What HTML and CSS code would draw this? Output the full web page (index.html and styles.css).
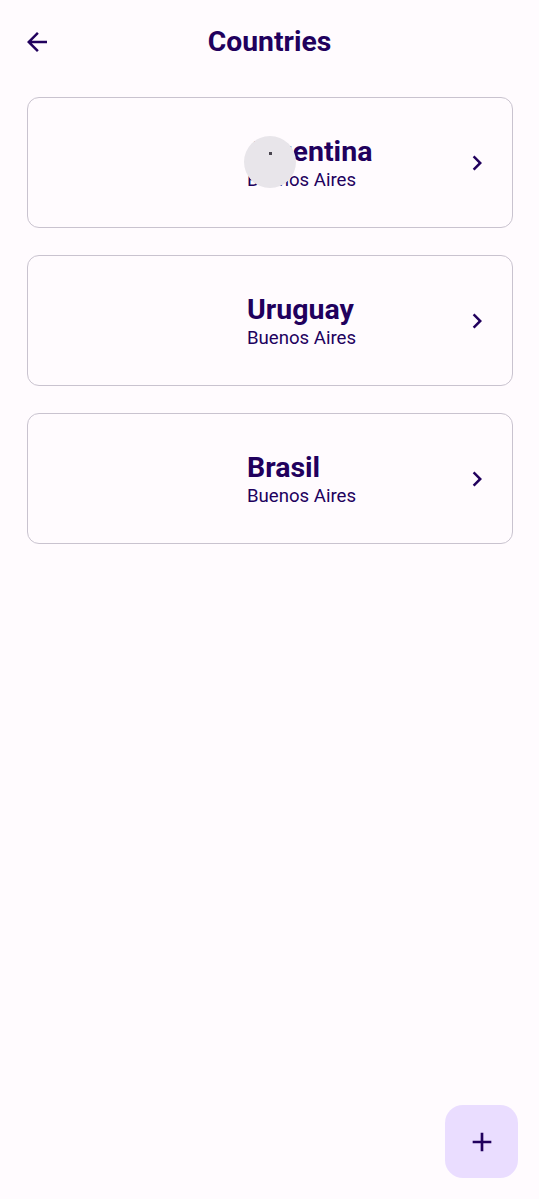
FILE: index.html
```html
<!DOCTYPE html>
<html>
<head>
<meta charset="utf-8">
<link rel="stylesheet" href="styles.css">
</head>
<body>
<div class="screen">
  <header class="topbar">
    <button class="back" aria-label="Back">
      <svg width="30" height="30" viewBox="0 0 24 24"><path d="M20 11H7.83l5.59-5.59L12 4l-8 8 8 8 1.41-1.41L7.83 13H20v-2z" fill="#21005d"/></svg>
    </button>
    <h1 class="title">Countries</h1>
  </header>
  <main class="list">
    <div class="card">
      <div class="thumb"></div>
      <div class="text">
        <div class="name">Argentina</div>
        <div class="sub">Buenos Aires</div>
      </div>
      <div class="chev"><svg width="30" height="30" viewBox="0 0 24 24"><path d="M8.59 16.59 13.17 12 8.59 7.41 10 6l6 6-6 6z" fill="#21005d"/></svg></div>
      <div class="loader"><span class="dot"></span></div>
    </div>
    <div class="card">
      <div class="thumb"></div>
      <div class="text">
        <div class="name">Uruguay</div>
        <div class="sub">Buenos Aires</div>
      </div>
      <div class="chev"><svg width="30" height="30" viewBox="0 0 24 24"><path d="M8.59 16.59 13.17 12 8.59 7.41 10 6l6 6-6 6z" fill="#21005d"/></svg></div>
    </div>
    <div class="card">
      <div class="thumb"></div>
      <div class="text">
        <div class="name">Brasil</div>
        <div class="sub">Buenos Aires</div>
      </div>
      <div class="chev"><svg width="30" height="30" viewBox="0 0 24 24"><path d="M8.59 16.59 13.17 12 8.59 7.41 10 6l6 6-6 6z" fill="#21005d"/></svg></div>
    </div>
  </main>
  <button class="fab" aria-label="Add">
    <svg width="32" height="32" viewBox="0 0 24 24"><path d="M19 13h-6v6h-2v-6H5v-2h6V5h2v6h6v2z" fill="#21005d"/></svg>
  </button>
</div>
</body>
</html>
```
FILE: styles.css
```css
* { box-sizing: border-box; }
html, body { margin: 0; padding: 0; }
body {
  background: #fffbfe;
  font-family: Roboto, "Noto Sans", sans-serif;
  color: #21005d;
}
.screen {
  position: relative;
  width: 539px;
  height: 1199px;
  overflow: hidden;
}
.topbar {
  position: relative;
  height: 84px;
  display: flex;
  align-items: center;
  justify-content: center;
}
.back {
  position: absolute;
  left: 22px;
  top: 27px;
  width: 30px;
  height: 30px;
  padding: 0;
  border: 0;
  background: none;
  display: flex;
}
.title {
  margin: 0;
  font-size: 28.3px;
  font-weight: 700;
  line-height: 1;
}
.list {
  display: flex;
  flex-direction: column;
  gap: 27px;
  padding: 13px 26px 0 27px;
}
.card {
  position: relative;
  height: 131px;
  border: 1.5px solid #c9c3cf;
  border-radius: 12px;
  display: grid;
  grid-template-columns: 219px 1fr 36px;
  align-items: center;
  padding-right: 17px;
  padding-top: 1px;
}
.text {
  display: flex;
  flex-direction: column;
  gap: 1px;
}
.name {
  font-size: 28.5px;
  font-weight: 700;
  line-height: 32px;
}
.sub {
  font-size: 18.6px;
  font-weight: 400;
  line-height: 22px;
}
.chev { display: flex; justify-content: center; }
.loader {
  position: absolute;
  left: 216px;
  top: 38px;
  width: 52px;
  height: 52px;
  border-radius: 50%;
  background: #e8e5ea;
}
.dot {
  position: absolute;
  left: 25px;
  top: 16px;
  width: 3px;
  height: 3px;
  background: #49454f;
}
.fab {
  position: absolute;
  left: 445px;
  top: 1105px;
  width: 73px;
  height: 73px;
  border: 0;
  border-radius: 18px;
  background: #eaddff;
  display: flex;
  align-items: center;
  justify-content: center;
  padding: 0;
}
```
